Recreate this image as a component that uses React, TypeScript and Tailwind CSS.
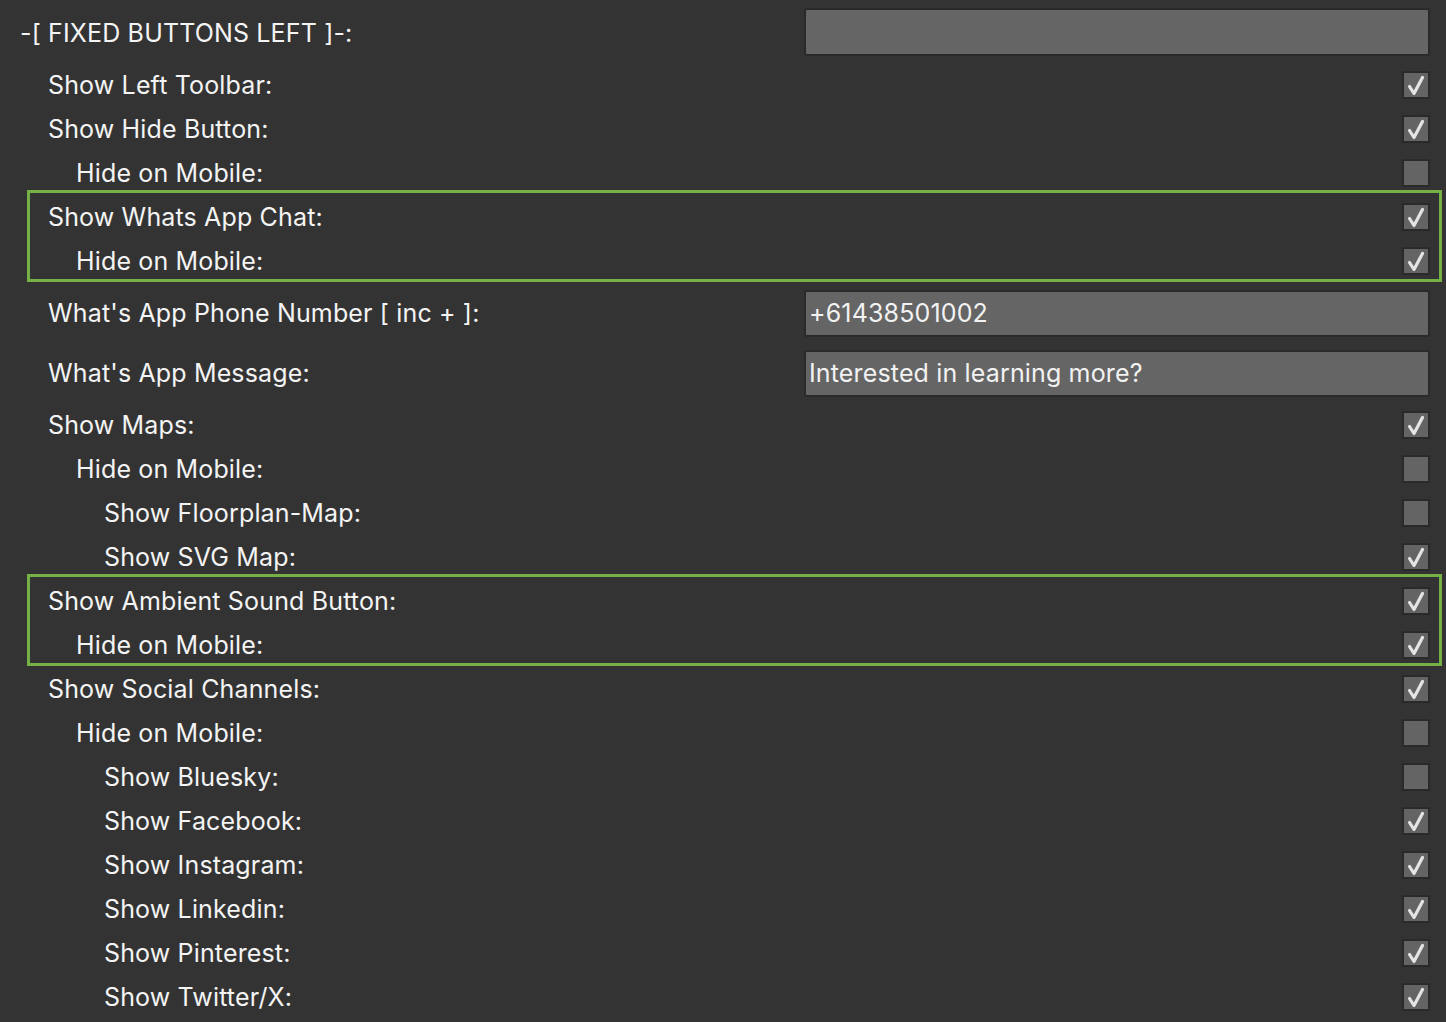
import React from 'react'

type Row =
  | { kind: 'check'; label: string; level: number; checked: boolean }
  | { kind: 'input'; label: string; level: number; value: string }
  | { kind: 'group'; rows: Row[] }

const rows: Row[] = [
  { kind: 'check', label: 'Show Left Toolbar:', level: 1, checked: true },
  { kind: 'check', label: 'Show Hide Button:', level: 1, checked: true },
  { kind: 'check', label: 'Hide on Mobile:', level: 2, checked: false },
  {
    kind: 'group',
    rows: [
      { kind: 'check', label: 'Show Whats App Chat:', level: 1, checked: true },
      { kind: 'check', label: 'Hide on Mobile:', level: 2, checked: true },
    ],
  },
  { kind: 'input', label: "What's App Phone Number [ inc + ]:", level: 1, value: '+61438501002' },
  { kind: 'input', label: "What's App Message:", level: 1, value: 'Interested in learning more?' },
  { kind: 'check', label: 'Show Maps:', level: 1, checked: true },
  { kind: 'check', label: 'Hide on Mobile:', level: 2, checked: false },
  { kind: 'check', label: 'Show Floorplan-Map:', level: 3, checked: false },
  { kind: 'check', label: 'Show SVG Map:', level: 3, checked: true },
  {
    kind: 'group',
    rows: [
      { kind: 'check', label: 'Show Ambient Sound Button:', level: 1, checked: true },
      { kind: 'check', label: 'Hide on Mobile:', level: 2, checked: true },
    ],
  },
  { kind: 'check', label: 'Show Social Channels:', level: 1, checked: true },
  { kind: 'check', label: 'Hide on Mobile:', level: 2, checked: false },
  { kind: 'check', label: 'Show Bluesky:', level: 3, checked: false },
  { kind: 'check', label: 'Show Facebook:', level: 3, checked: true },
  { kind: 'check', label: 'Show Instagram:', level: 3, checked: true },
  { kind: 'check', label: 'Show Linkedin:', level: 3, checked: true },
  { kind: 'check', label: 'Show Pinterest:', level: 3, checked: true },
  { kind: 'check', label: 'Show Twitter/X:', level: 3, checked: true },
]

const indent = ['pl-[20px]', 'pl-[48px]', 'pl-[76px]', 'pl-[104px]']

function Checkbox({ checked }: { checked: boolean }) {
  return (
    <div className="w-[28px] h-[28px] border-2 border-[#2a2a2a] bg-[#646464] flex items-center justify-center">
      {checked && (
        <svg width="24" height="24" viewBox="0 0 24 24" fill="none">
          <path d="M5.5 13.5 L10 20.5 L18.5 4.5" stroke="#e4e4e4" strokeWidth="3.2" strokeLinecap="round" strokeLinejoin="round" />
        </svg>
      )}
    </div>
  )
}

function TextBox({ value }: { value: string }) {
  return (
    <div className="w-[626px] h-[47px] rounded-[3px] border-2 border-[#2a2a2a] bg-[#656565] flex items-center px-[3px] text-[#f2f2f2]">
      {value}
    </div>
  )
}

function SettingRow({ row }: { row: Row }) {
  if (row.kind === 'group') {
    return (
      <div className="relative">
        {row.rows.map((r, i) => (
          <SettingRow key={i} row={r} />
        ))}
        {/* highlight frame */}
        <div className="absolute left-[27px] right-[4px] top-[-5px] bottom-[1px] border-[3px] border-[#74b043] pointer-events-none" />
      </div>
    )
  }
  if (row.kind === 'input') {
    return (
      <div className={`h-[60px] flex items-center justify-between pr-[16px] ${indent[row.level]}`}>
        <span>{row.label}</span>
        <TextBox value={row.value} />
      </div>
    )
  }
  return (
    <div className={`h-[44px] flex items-center justify-between pr-[16px] ${indent[row.level]}`}>
      <span>{row.label}</span>
      <Checkbox checked={row.checked} />
    </div>
  )
}

export default function App() {
  return (
    <div
      className="min-h-screen w-full bg-[#333333] text-[#f4f4f4] text-[25px] leading-none tracking-[0.15px]"
      style={{ fontFamily: 'Inter, "Noto Sans", sans-serif' }}
    >
      <div className="h-[63px] flex items-start justify-between pl-[20px] pr-[16px] pt-[8px]">
        <span className="mt-[13px]">-[ FIXED BUTTONS LEFT ]-:</span>
        <div className="w-[626px] h-[48px] rounded-[3px] border-2 border-[#2a2a2a] bg-[#656565]" />
      </div>
      {rows.map((r, i) => (
        <SettingRow key={i} row={r} />
      ))}
    </div>
  )
}
